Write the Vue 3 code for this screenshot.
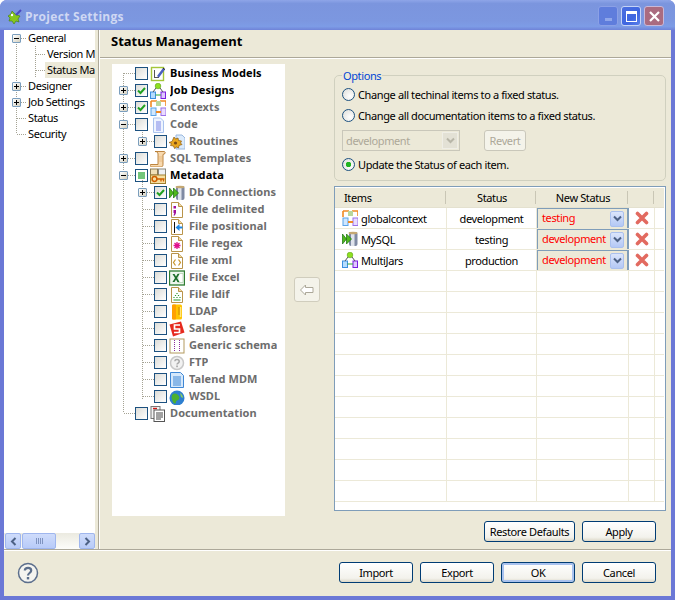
<script setup>
const icons = {
  biz: `<rect x="1.500" y="1.500" width="12" height="13" fill="#fff" stroke="#a4c639" stroke-width="1.400"/><path d="M4 4h1v8H4zM4 11h5v1H4z" fill="#555"/><path d="M7 10l6-8 2 1.500-6 8z" fill="#4a5fc0"/><path d="M13 2l2 1.500" stroke="#222"/>`,
  job: `<circle cx="8" cy="3" r="2.800" fill="#8fe021" stroke="#5aa510" stroke-width=".6"/><rect x=".5" y="9" width="5" height="6.500" fill="#b5dcff" stroke="#3c8fe0"/><rect x="11" y="9" width="4.500" height="6.500" fill="#e0c8ff" stroke="#7a1fe0"/><path d="M5.500 12H11" stroke="#2ea82e"/><path d="M3 9l3-4M13 9l-3-4" stroke="#555"/>`,
  ctx: `<path d="M1 1h6M1 1v6M10 1h6M16 1v5" stroke="#f08a24" stroke-width="1.600" fill="none"/><rect x="6" y="1" width="5" height="5" fill="#b9d79c"/><rect x="1" y="8" width="5" height="7.500" fill="#cfe7ff" stroke="#5ba3e8"/><rect x="11" y="8" width="5" height="7.500" fill="#eadcff" stroke="#9a70e8"/><path d="M6 12h5" stroke="#f08a24" stroke-width="2"/>`,
  code: `<path d="M3.500 1h7l3 3v11.500h-10z" fill="#eef4ff" stroke="#a9c3ee"/><path d="M6 5h5M6 7h5M6 9h5M6 11h5M6 13h5" stroke="#7d86e6"/>`,
  routines: `<path d="M7 1h6l3 3v11H7z" fill="#dcebfb" stroke="#9ab8de"/><path d="M5 3l1.500 2L9 4l.5 2.500 3 .5-1 2 1.500 1.500-3 1-.5 2.500-2-1-2 1.500-1-2.500-3-.5 1-2L0 8.500l3-1z" fill="#eba81e" stroke="#8a5a10" stroke-width=".7"/><circle cx="6.500" cy="9" r="1.600" fill="#7a4a10"/>`,
  sql: `<path d="M5 .5h9c1 0 1.500 1 1 2l-2 1v10c0 2-1 2.500-2.500 2.500H2c-1.500 0-2-1-1.500-2.500H8V3c0-1.500-1-2.500-3-2.500z" fill="#f8d9ae" stroke="#b5792f" stroke-width=".9"/><path d="M9 6h3M9 8h3M9 10h3" stroke="#e9bd85"/>`,
  meta: `<rect x=".5" y="1" width="7" height="6" fill="#f0e0b8" stroke="#8a7a55"/><rect x="8.500" y="1" width="7" height="7" fill="#eef0f4" stroke="#8a8a80"/><rect x=".5" y="7" width="15" height="8.500" fill="#f6dfa0" stroke="#a08030"/><circle cx="4.500" cy="11" r="2.400" fill="none" stroke="#d06000" stroke-width="1.500"/><path d="M7 11h7.500M11 11v2.500M13.500 11v2.500" stroke="#d06000" stroke-width="1.300"/>`,
  db: `<rect x="7" y="1" width="8.500" height="14" rx="2" fill="#7f8aa3"/><rect x="9" y="1" width="3.500" height="14" fill="#dfe3ec"/><ellipse cx="11" cy="2" rx="4.500" ry="1.300" fill="#c5a873"/><path d="M.5 3l4 5-4 5zM4.500 3L9.500 8l-5 5z" fill="#4fb81c" stroke="#17700c" stroke-width=".7"/>`,
  delim: `<path d="M2.500 .5h7l4 4v11h-11z" fill="#fff" stroke="#b9944a"/><path d="M9.500 .5v4h4" fill="#f0d9a8" stroke="#b9944a"/><path d="M4.500 4h2.500v2.500H4.500zM4.500 8H7v3l-1.200 2.500H4.500l.8-2.500h-.8z" fill="#a0109c"/>`,
  pos: `<path d="M2.500 .5h7l4 4v11h-11z" fill="#fff" stroke="#b9944a"/><path d="M9.500 .5v4h4" fill="#f0d9a8" stroke="#b9944a"/><path d="M5.500 3v11" stroke="#111"/><path d="M6.500 8.500l4-3.500v2.500h3v2h-3V12z" fill="#1e88e5"/>`,
  regex: `<path d="M2.500 .5h7l4 4v11h-11z" fill="#fff" stroke="#b9944a"/><path d="M9.500 .5v4h4" fill="#f0d9a8" stroke="#b9944a"/><path d="M8 6v7M4.500 9.500h7M5.500 7l5 5M10.500 7l-5 5" stroke="#e0108c" stroke-width="1.300"/>`,
  xml: `<path d="M2.500 .5h7l4 4v11h-11z" fill="#fff" stroke="#b9944a"/><path d="M9.500 .5v4h4" fill="#f0d9a8" stroke="#b9944a"/><path d="M6.500 6.500L4.500 9.500l2 3M9.500 6.500l2 3-2 3" fill="none" stroke="#c8952a" stroke-width="1.200"/>`,
  excel: `<rect x=".5" y="1" width="15" height="14" fill="#eef6ee" stroke="#2e7d32" stroke-width="1.300"/><path d="M9 3.500h5v9H9z" fill="#fff" stroke="#9fc7a0" stroke-width=".6"/><path d="M3.500 4h2l1.500 2.500L8.500 4h2L8 8l2.500 4h-2L7 9.500 5.500 12h-2L6 8z" fill="#1b6e2a"/>`,
  ldif: `<path d="M2.500 .5h7l4 4v11h-11z" fill="#fff" stroke="#b9944a"/><path d="M9.500 .5v4h4" fill="#f0d9a8" stroke="#b9944a"/><path d="M8 6v1M6.500 8v1M9.500 8v1M5 10v1M8 10v1M11 10v1M4.500 13h7" stroke="#2c9a2c" stroke-width="1.200"/>`,
  ldap: `<rect x="3" y=".5" width="10" height="15" rx="1.500" fill="#ffc400"/><rect x="3" y=".5" width="4" height="15" rx="1" fill="#ffa000"/><path d="M11.500 3v10" stroke="#ffe680" stroke-width="1.500"/><path d="M9 4h2M9 6h2M9 8h2M9 10h2" stroke="#c98500"/>`,
  sales: `<path d="M.5 3.500L12 .5l3.500 11L4 15.500z" fill="#e62a1e"/><path d="M11 4H5.500v4H10.500v3.500H5" fill="none" stroke="#fff" stroke-width="1.700"/>`,
  generic: `<rect x="1" y="1" width="14" height="14" fill="#fff" stroke="#b39a5e"/><path d="M5.500 2v12M10.500 2v12" stroke="#8a2d9c" stroke-dasharray="1 1"/>`,
  ftp: `<circle cx="8" cy="8" r="6.500" fill="#f2f2f2" stroke="#c8c8c8" stroke-width="1.500"/><path d="M5.800 6.200C6 4 10.200 4 10.200 6.400c0 1.600-2.200 1.700-2.200 3.200" fill="none" stroke="#a8a8a8" stroke-width="1.500"/><rect x="7.200" y="10.500" width="1.700" height="1.700" fill="#a8a8a8"/>`,
  mdm: `<path d="M1.500 .5h10l3 3v12h-13z" fill="#d5e8fb" stroke="#3f87d5"/><path d="M4 5h8M4 7h8M4 9h8M4 11h8M4 13h8" stroke="#3f87d5"/>`,
  wsdl: `<circle cx="8" cy="9" r="7.500" fill="#2e7fd0"/><path d="M3 6c3-3 5-1 6 0s2 2 1 4-3 1-3 3-2 2-3 0-2-5-1-7z" fill="#4cb030"/><path d="M11 4c2 1 3 3 3 5l-2-1z" fill="#8fd060"/>`,
  doc: `<rect x="1" y=".5" width="9" height="12" fill="#f2f2f2" stroke="#777"/><path d="M3 2.500h4" stroke="#d01818" stroke-width="1.400"/><rect x="4" y="4" width="10.500" height="11.500" fill="#fff" stroke="#555"/><path d="M6 7h7M6 9h7M6 11h7M6 13h5" stroke="#444"/>`
};

const tree = [
  { label: "Business Models", level: 0, icon: "biz", strong: true },
  { label: "Job Designs", level: 0, icon: "job", strong: true, toggle: "plus", check: "on" },
  { label: "Contexts", level: 0, icon: "ctx", toggle: "plus", check: "on" },
  { label: "Code", level: 0, icon: "code", toggle: "minus" },
  { label: "Routines", level: 1, icon: "routines", toggle: "plus" },
  { label: "SQL Templates", level: 0, icon: "sql", toggle: "plus" },
  { label: "Metadata", level: 0, icon: "meta", strong: true, toggle: "minus", check: "part" },
  { label: "Db Connections", level: 1, icon: "db", toggle: "plus", check: "on" },
  { label: "File delimited", level: 1, icon: "delim" },
  { label: "File positional", level: 1, icon: "pos" },
  { label: "File regex", level: 1, icon: "regex" },
  { label: "File xml", level: 1, icon: "xml" },
  { label: "File Excel", level: 1, icon: "excel" },
  { label: "File ldif", level: 1, icon: "ldif" },
  { label: "LDAP", level: 1, icon: "ldap" },
  { label: "Salesforce", level: 1, icon: "sales" },
  { label: "Generic schema", level: 1, icon: "generic" },
  { label: "FTP", level: 1, icon: "ftp" },
  { label: "Talend MDM", level: 1, icon: "mdm" },
  { label: "WSDL", level: 1, icon: "wsdl" },
  { label: "Documentation", level: 0, icon: "doc" }
];

const nav = [
  { label: "General", level: 0, toggle: "minus" },
  { label: "Version Management", level: 1 },
  { label: "Status Management", level: 1, selected: true },
  { label: "Designer", level: 0, toggle: "plus" },
  { label: "Job Settings", level: 0, toggle: "plus" },
  { label: "Status", level: 0 },
  { label: "Security", level: 0 }
];

const items = [
  { name: "globalcontext", icon: "ctx", status: "development", next: "testing" },
  { name: "MySQL", icon: "db", status: "testing", next: "development" },
  { name: "MultiJars", icon: "job", status: "production", next: "development" }
];
const blankRows = Array.from({ length: 11 }, (_, i) => i);
</script>

<template>
  <div class="window">
    <header class="titlebar">
      <svg class="app-icon" width="16" height="16" viewBox="0 0 16 16">
        <path d="M1 7l3-2 1-3 3 3 2 1 3 1-2 3 1 3-3-1-2 3-2-3-3 0 1-3z" fill="#86c61e" stroke="#3f7a10" stroke-width=".6"/>
        <circle cx="5" cy="6" r="1.200" fill="#fff"/>
        <path d="M9 6l5-5" stroke="#4a4ac0" stroke-width="2"/>
      </svg>
      <span class="title">Project Settings</span>
      <div class="controls">
        <button class="ctl ctl-min"><i></i></button>
        <button class="ctl ctl-max"><i></i></button>
        <button class="ctl ctl-close">
          <svg width="13" height="13" viewBox="0 0 13 13"><path d="M2 2l9 9M11 2l-9 9" stroke="#fff" stroke-width="2.200"/></svg>
        </button>
      </div>
    </header>

    <div class="client">
      <div class="main">
        <aside class="nav">
          <div class="nav-tree">
            <svg class="guides" width="91" height="120">
              <path d="M12.500 8v96M13 8.500h11M13 56.500h11M13 72.500h11M13 88.500h11M13 104.500h11M31.500 16v40M32 24.500h10M32 40.500h10" stroke="#a5a394" stroke-dasharray="1 1" fill="none"/>
            </svg>
            <div v-for="n in nav" :key="n.label" class="nav-row" :class="'lv' + n.level">
              <span v-if="n.toggle" class="toggle" :class="n.toggle"></span>
              <span class="nav-label" :class="{ selected: n.selected }">{{ n.label }}</span>
            </div>
          </div>
          <div class="hscroll">
            <span class="sb-btn"><svg width="9" height="9" viewBox="0 0 9 9"><path d="M6.500 1L3 4.500 6.500 8" fill="none" stroke="#4d6185" stroke-width="2"/></svg></span>
            <span class="sb-thumb"><i></i><i></i><i></i><i></i></span>
            <span class="sb-btn sb-end"><svg width="9" height="9" viewBox="0 0 9 9"><path d="M2.500 1L6 4.500 2.500 8" fill="none" stroke="#4d6185" stroke-width="2"/></svg></span>
          </div>
        </aside>
        <div class="sash"></div>

        <section class="content">
          <h1 class="page-title">Status Management</h1>
          <div class="page-body">
            <div class="tree">
              <svg class="guides" width="173" height="452">
                <path d="M11.500 9v340M12 9.500h11M12 26.500h11M12 43.500h11M12 60.500h11M12 94.500h11M12 111.500h11M12 349.500h11M30.500 62v16M31 77.500h11M30.500 114v221M31 128.500h11M31 145.500h11M31 162.500h11M31 179.500h11M31 196.500h11M31 213.500h11M31 230.500h11M31 247.500h11M31 264.500h11M31 281.500h11M31 298.500h11M31 315.500h11M31 332.500h11" stroke="#a5a394" stroke-dasharray="1 1" fill="none"/>
              </svg>
              <div v-for="t in tree" :key="t.label" class="tree-row" :class="'lv' + t.level">
                <span v-if="t.toggle" class="toggle" :class="t.toggle"></span>
                <span class="check" :class="t.check">
                  <svg v-if="t.check === 'on'" width="9" height="9" viewBox="0 0 9 9"><path d="M1 4.500l2.500 2.500L8 2" fill="none" stroke="#21a121" stroke-width="2"/></svg>
                </span>
                <svg class="node-icon" width="16" height="16" viewBox="0 0 16 16" v-html="icons[t.icon]"></svg>
                <span class="tree-label" :class="{ strong: t.strong }">{{ t.label }}</span>
              </div>
            </div>

            <button class="move-btn" disabled>
              <svg width="16" height="12" viewBox="0 0 16 12"><path d="M6.500 1L1.500 6l5 5V8.500H14v-5H6.500z" fill="#fff" stroke="#aca899"/></svg>
            </button>

            <div class="right">
              <fieldset class="options">
                <legend>Options</legend>
                <label class="radio-row"><span class="radio"></span>Change all techinal items to a fixed status.</label>
                <label class="radio-row"><span class="radio"></span>Change all documentation items to a fixed status.</label>
                <div class="fixed-row">
                  <div class="combo-off">
                    <span>development</span>
                    <i><svg width="9" height="7" viewBox="0 0 9 7"><path d="M1 1.500l3.500 3.500L8 1.500" fill="none" stroke="#b8b6a8" stroke-width="2"/></svg></i>
                  </div>
                  <button class="btn-off" disabled>Revert</button>
                </div>
                <label class="radio-row"><span class="radio on"></span>Update the Status of each item.</label>
              </fieldset>

              <div class="table">
                <div class="thead">
                  <div class="th th-items">Items</div>
                  <div class="th">Status</div>
                  <div class="th">New Status</div>
                  <div class="th"></div>
                  <div class="th th-fill"></div>
                </div>
                <div v-for="row in items" :key="row.name" class="tr">
                  <div class="td td-name">
                    <svg width="16" height="16" viewBox="0 0 16 16" v-html="icons[row.icon]"></svg>
                    {{ row.name }}
                  </div>
                  <div class="td td-center">{{ row.status }}</div>
                  <div class="td td-combo">
                    <span class="combo-val">{{ row.next }}</span>
                    <span class="combo-arrow"><svg width="9" height="7" viewBox="0 0 9 7"><path d="M1 1.500l3.500 3.500L8 1.500" fill="none" stroke="#4d6185" stroke-width="2"/></svg></span>
                  </div>
                  <div class="td td-del">
                    <svg width="14" height="14" viewBox="0 0 14 14"><path d="M2.500 2.500l9 9M11.500 2.500l-9 9" stroke="#e26a60" stroke-width="3.600" stroke-linecap="round"/></svg>
                  </div>
                  <div class="td"></div>
                </div>
                <div v-for="i in blankRows" :key="i" class="tr">
                  <div class="td"></div><div class="td"></div><div class="td"></div><div class="td"></div><div class="td"></div>
                </div>
              </div>
            </div>
          </div>
          <div class="apply-row">
            <button class="btn btn-wide">Restore Defaults</button>
            <button class="btn">Apply</button>
          </div>
        </section>
      </div>

      <footer class="footer">
        <svg class="help" width="22" height="22" viewBox="0 0 22 22">
          <circle cx="11" cy="11" r="9.500" fill="#f4f4f0" stroke="#5b6e8c" stroke-width="1.500"/>
          <path d="M7.800 8.500C8 5 14.200 5 14.200 8.500c0 2.500-3.200 2.500-3.200 5" fill="none" stroke="#5b6e8c" stroke-width="2.200"/>
          <rect x="9.800" y="15" width="2.400" height="2.400" fill="#5b6e8c"/>
        </svg>
        <div class="footer-btns">
          <button class="btn">Import</button>
          <button class="btn">Export</button>
          <button class="btn btn-default">OK</button>
          <button class="btn">Cancel</button>
        </div>
      </footer>
    </div>
  </div>
</template>

<style>
html, body { margin: 0; background: #fff; }
</style>

<style scoped>
* { box-sizing: border-box; }

.window {
  width: 675px;
  height: 600px;
  display: flex;
  flex-direction: column;
  background: #6b78d6;
  border-radius: 7px 7px 0 0;
  overflow: hidden;
  font: 11px/1 "Noto Sans", sans-serif;
  letter-spacing: -.38px;
  color: #000;
}

/* title bar */
.titlebar {
  height: 30px;
  flex: none;
  display: flex;
  align-items: center;
  padding: 3px 11px 0 7px;
  background: linear-gradient(#8ea5e8 0, #7b95de 12%, #7c97e0 70%, #7d9ce6 88%, #6f83d8 100%);
}
.app-icon { flex: none; }
.title {
  margin-left: 2px;
  font: bold 12px "Open Sans", sans-serif;
  letter-spacing: .3px;
  color: #cfd8f3;
}
.controls { margin-left: auto; display: flex; gap: 3px; margin-top: -1px; }
.ctl {
  width: 20px;
  height: 20px;
  padding: 0;
  border: 1px solid #a8bbee;
  border-radius: 3px;
  display: flex;
  align-items: center;
  justify-content: center;
}
.ctl-min { background: #5f7ddc; border-color: #8ba0e6; align-items: flex-end; }
.ctl-min i { width: 7px; height: 3px; background: #8fa6ea; margin-bottom: 4px; }
.ctl-max { background: linear-gradient(135deg, #4a6ee0, #3f66e0 60%, #5a80ea); border-color: #c5d3f6; }
.ctl-max i { width: 11px; height: 11px; border: 1px solid #fff; border-top-width: 3px; }
.ctl-close { background: #aa6b80; border-color: #c8b8d8; }

/* client */
.client {
  flex: 1;
  min-height: 0;
  margin: 0 4px 4px;
  display: flex;
  flex-direction: column;
  background: #ece9d8;
}
.main { height: 519px; flex: none; display: flex; }

/* left nav */
.nav { width: 91px; flex: none; display: flex; flex-direction: column; background: #fff; }
.nav-tree { flex: 1; position: relative; overflow: hidden; padding-top: 1px; }
.guides { position: absolute; left: 0; top: 0; pointer-events: none; }
.nav-row {
  height: 16px;
  position: relative;
  display: flex;
  align-items: center;
  white-space: nowrap;
  font-size: 11px;
}
.nav-row.lv0 { padding-left: 22px; }
.nav-row.lv1 { padding-left: 41px; }
.nav-row .toggle { position: absolute; left: 8px; top: 3px; }
.nav-label { padding: 2px 1px 2px 2px; margin-top: -2px; line-height: 12px; background: #fff; }
.nav-label.selected { background: #ece9d8; flex: 1; }

.toggle {
  width: 9px;
  height: 9px;
  border: 1px solid #7b9ebd;
  border-radius: 1px;
  background: linear-gradient(135deg, #fff, #dcd9c8);
  display: block;
}
.toggle.plus {
  background:
    linear-gradient(#000, #000) center / 5px 1px no-repeat,
    linear-gradient(#000, #000) center / 1px 5px no-repeat,
    linear-gradient(135deg, #fff, #d4d0c0);
}
.toggle.minus {
  background:
    linear-gradient(#000, #000) center / 5px 1px no-repeat,
    linear-gradient(135deg, #fff, #d4d0c0);
}

.hscroll {
  height: 16px;
  flex: none;
  display: flex;
  background: linear-gradient(#ebeae0, #fdfdfa);
}
.sb-btn, .sb-thumb {
  background: linear-gradient(#cfdcfb, #b8cbf8);
  border: 1px solid #9fb6ee;
  border-radius: 2px;
  display: flex;
  align-items: center;
  justify-content: center;
}
.sb-btn { width: 16px; margin-left: 1px; }
.sb-end { margin-left: auto; }
.sb-thumb { width: 34px; margin-left: 1px; gap: 1px; }
.sb-thumb i { width: 1px; height: 6px; background: #7f93bf; }

.sash {
  width: 5px;
  flex: none;
  border-right: 1px solid #fff;
  background: linear-gradient(90deg, #ece9d8 3px, #aca899 3px);
}

/* page */
.content { flex: 1; min-width: 0; display: flex; flex-direction: column; }
.page-title {
  height: 29px;
  flex: none;
  margin: 0;
  padding: 3px 0 0 11px;
  border-bottom: 1px solid #fff;
  box-shadow: inset 0 -1px 0 #aca899;
  font: bold 13px "Noto Sans", sans-serif;
  letter-spacing: 0;
  line-height: 17px;
}
.page-body { height: 462px; flex: none; display: flex; padding: 5px 0 0 12px; }

.tree {
  width: 173px;
  height: 452px;
  flex: none;
  position: relative;
  background: #fff;
  padding-top: 1px;
  overflow: hidden;
}
.tree-row {
  height: 17px;
  position: relative;
  display: flex;
  align-items: center;
  white-space: nowrap;
}
.tree-row.lv0 { padding-left: 23px; }
.tree-row.lv1 { padding-left: 42px; }
.tree-row .toggle { position: absolute; top: 4px; }
.tree-row.lv0 .toggle { left: 7px; }
.tree-row.lv1 .toggle { left: 26px; }
.check {
  width: 13px;
  height: 13px;
  flex: none;
  border: 1px solid #1c5180;
  background: linear-gradient(135deg, #dcdcd7, #fff);
  display: flex;
  align-items: center;
  justify-content: center;
}
.check.part { background: #73c67c content-box; padding: 2px; border-color: #1c5180; }
.node-icon { margin-left: 2px; flex: none; }
.tree-label {
  margin: -2px 0 0 4px;
  max-width: 89px;
  overflow: hidden;
  font: bold 11px "Noto Sans", sans-serif;
  letter-spacing: .08px;
  line-height: 14px;
  color: #6d6d6d;
}
.tree-row.lv0 .tree-label { max-width: 110px; }
.tree-label.strong { color: #000; }

.move-btn {
  width: 26px;
  height: 25px;
  flex: none;
  margin: 213px 0 0 9px;
  padding: 0;
  display: flex;
  align-items: center;
  justify-content: center;
  border: 1px solid #d0cdbd;
  border-radius: 3px;
  background: #f4f3ea;
}

.right { width: 332px; flex: none; margin-left: 14px; display: flex; flex-direction: column; }
.options {
  height: 112px;
  flex: none;
  margin: 5px 0 0;
  padding: 2px 7px 0;
  min-width: 0;
  border: 1px solid #d0d0bf;
  border-radius: 5px;
}
.options legend { padding: 0 1px; font-size: 11px; line-height: 13px; color: #0046d5; }
.radio-row { height: 21px; display: flex; align-items: center; gap: 3px; white-space: nowrap; }
.radio {
  width: 13px;
  height: 13px;
  flex: none;
  border: 1px solid #1c5180;
  border-radius: 50%;
  background: radial-gradient(circle at 65% 65%, #fff, #dcdcd7);
}
.radio.on {
  background: radial-gradient(circle, #22b322 0 2.500px, transparent 3px), radial-gradient(circle at 65% 65%, #fff, #dcdcd7);
}
.fixed-row { height: 28px; display: flex; align-items: center; }
.combo-off {
  width: 118px;
  height: 21px;
  display: flex;
  align-items: center;
  justify-content: space-between;
  padding: 1px 1px 1px 3px;
  border: 1px solid #c9c7ba;
  color: #aca899;
}
.combo-off i {
  width: 16px;
  height: 17px;
  display: flex;
  align-items: center;
  justify-content: center;
  background: #e3e1d5;
  border: 1px solid #efeee6;
}
.btn-off {
  width: 42px;
  height: 21px;
  margin-left: 24px;
  padding: 0;
  border: 1px solid #c9c7ba;
  border-radius: 3px;
  background: #f4f3ea;
  font: inherit;
  letter-spacing: inherit;
  color: #aca899;
}

.table {
  height: 325px;
  flex: none;
  margin-top: 5px;
  padding: 1px 0 0;
  border: 1px solid #7f9db9;
  background: #fff;
  overflow: hidden;
}
.thead, .tr {
  display: grid;
  grid-template-columns: 112px 90px 92px 26px 1fr;
  margin-right: 1px;
}
.thead { height: 20px; background: #ece9d8; border-bottom: 1px solid #e4e1cf; }
.th {
  display: flex;
  align-items: center;
  justify-content: center;
  position: relative;
  font-size: 11px;
}
.th:not(.th-fill)::after {
  content: "";
  position: absolute;
  right: 1px;
  top: 3px;
  bottom: 3px;
  width: 1px;
  background: #c9c6b5;
}
.th-items { justify-content: flex-start; padding-left: 9px; }
.tr { height: 21px; border-bottom: 1px solid #ece9d8; }
.td { border-right: 1px solid #ece9d8; display: flex; align-items: center; min-width: 0; }
.td:last-child { border-right: 0; }
.td-name { padding-left: 7px; gap: 3px; }
.td-center { justify-content: center; }
.td-combo {
  justify-content: space-between;
  padding: 0 3px 0 2px;
  background: #ece9d8;
  border: solid #7f9db9;
  border-width: 1px 2px 0 1px;
  color: #f00;
}
.combo-val { padding-left: 2px; margin-top: -3px; }
.combo-arrow {
  width: 14px;
  height: 16px;
  display: flex;
  align-items: center;
  justify-content: center;
  background: linear-gradient(#dbe5fb, #b4c8f5);
  border: 1px solid #aac0ee;
  border-radius: 2px;
}
.td-del { justify-content: center; }

.apply-row {
  height: 21px;
  flex: none;
  padding-right: 15px;
  display: flex;
  justify-content: flex-end;
  gap: 7px;
}

/* buttons */
.btn {
  width: 74px;
  height: 21px;
  padding: 0;
  border: 1px solid #003c74;
  border-radius: 3px;
  background: linear-gradient(#fff, #f3f2ec 80%, #dcd8c8);
  font: inherit;
  letter-spacing: inherit;
  color: #000;
}
.btn-wide { width: 91px; }
.btn-default { box-shadow: inset 0 0 0 2px #a9c2ee; }

/* footer */
.footer {
  flex: 1;
  min-height: 0;
  display: flex;
  align-items: center;
  padding: 0 15px 1px 13px;
  border-top: 1px solid #aca899;
  box-shadow: inset 0 1px 0 #fff;
}
.help { flex: none; }
.footer-btns { margin-left: auto; display: flex; gap: 7px; }
</style>
